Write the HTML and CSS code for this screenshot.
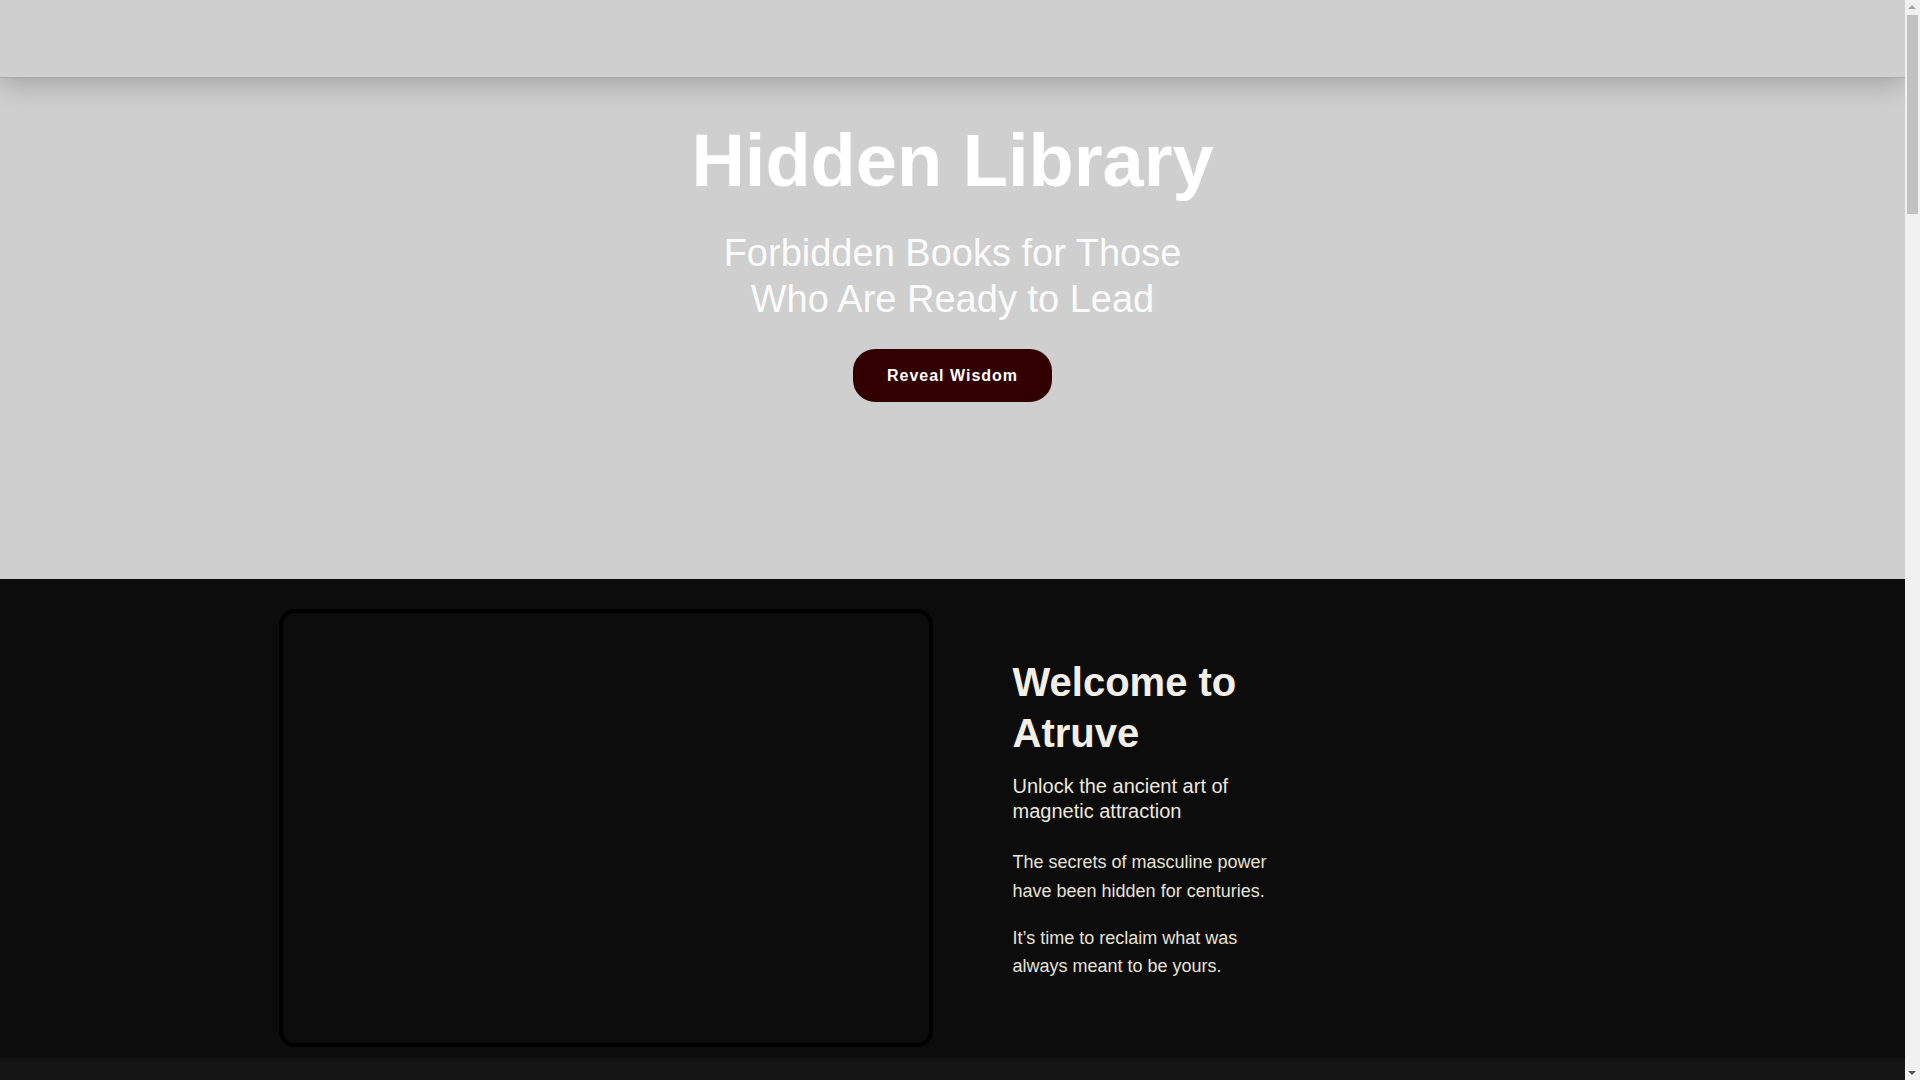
FILE: index.html
```html
<!DOCTYPE html>
<html lang="en">
<head>
<meta charset="utf-8">
<title>Hidden Library</title>
<link rel="stylesheet" href="styles.css">
</head>
<body>
<header class="site-header"></header>
<section class="hero">
  <h1 class="hero-title">Hidden Library</h1>
  <p class="hero-subtitle">Forbidden Books for Those Who Are Ready to Lead</p>
  <a class="hero-button" href="#welcome">Reveal Wisdom</a>
</section>
<section class="welcome" id="welcome">
  <div class="welcome-inner">
    <div class="media-card"></div>
    <div class="welcome-text">
      <h2 class="welcome-title">Welcome to Atruve</h2>
      <p class="welcome-lead">Unlock the ancient art of magnetic attraction</p>
      <p class="welcome-body">The secrets of masculine power have been hidden for centuries.</p>
      <p class="welcome-body">It’s time to reclaim what was always meant to be yours.</p>
    </div>
  </div>
</section>
<section class="next-section"></section>
<div class="scrollbar" aria-hidden="true">
  <span class="scroll-arrow scroll-up"></span>
  <span class="scroll-thumb"></span>
  <span class="scroll-arrow scroll-down"></span>
</div>
</body>
</html>
```
FILE: styles.css
```css
html, body {
  margin: 0;
  padding: 0;
}
body {
  margin-right: 15px;
  background: #0c0c0c;
  font-family: "Liberation Sans", Arial, sans-serif;
}
.site-header {
  position: relative;
  z-index: 2;
  height: 77px;
  background: #cfcfcf;
  border-bottom: 1px solid #a9a9a9;
  box-shadow: 0 6px 28px rgba(0, 0, 0, 0.22);
}
.hero {
  box-sizing: border-box;
  height: 501px;
  padding-top: 39px;
  background: #cfcfcf;
  text-align: center;
}
.hero-title {
  margin: 0;
  font-size: 74px;
  line-height: 1.2;
  font-weight: 700;
  color: #ffffff;
}
.hero-subtitle {
  max-width: 500px;
  margin: 24px auto 0;
  font-size: 38px;
  line-height: 46.5px;
  font-weight: 400;
  color: #fbfbfb;
}
.hero-button {
  display: inline-block;
  margin-top: 26px;
  padding: 17px 34px;
  line-height: 19px;
  font-size: 16px;
  font-weight: 700;
  letter-spacing: 1px;
  color: #ffffff;
  background: #330000;
  border-radius: 22px;
  text-decoration: none;
}
.welcome {
  box-sizing: border-box;
  height: 479px;
  padding-top: 30px;
  background: #0c0c0c;
}
.welcome-inner {
  display: flex;
  align-items: flex-start;
  width: 1348px;
  margin: 0 auto;
}
.media-card {
  box-sizing: border-box;
  flex: 0 0 654px;
  height: 438px;
  border: 4px solid #000000;
  border-radius: 16px;
  background: #0c0c0c;
}
.welcome-text {
  width: 270px;
  margin-left: 80px;
  padding-top: 48px;
}
.welcome-title {
  margin: 0 0 15px;
  font-size: 40px;
  line-height: 51px;
  font-weight: 700;
  color: #f3efe6;
}
.welcome-lead {
  margin: 0 0 24px;
  font-size: 20px;
  line-height: 25px;
  color: #ece8df;
}
.welcome-body {
  margin: 0 0 18px;
  font-size: 18px;
  line-height: 1.6;
  color: #e6e2d9;
}
.next-section {
  height: 4500px;
  background: #151515;
}
.scrollbar {
  position: fixed;
  top: 0;
  right: 0;
  z-index: 10;
  width: 15px;
  height: 100vh;
  background: #f1f1f1;
}
.scroll-thumb {
  position: absolute;
  top: 15px;
  left: 2px;
  width: 11px;
  height: 199px;
  background: #c1c1c1;
}
.scroll-arrow {
  position: absolute;
  left: 3px;
  width: 0;
  height: 0;
  border-left: 4.5px solid transparent;
  border-right: 4.5px solid transparent;
}
.scroll-up {
  top: 5px;
  border-bottom: 4px solid #a3a3a3;
}
.scroll-down {
  bottom: 5px;
  border-top: 4px solid #505050;
}
```
